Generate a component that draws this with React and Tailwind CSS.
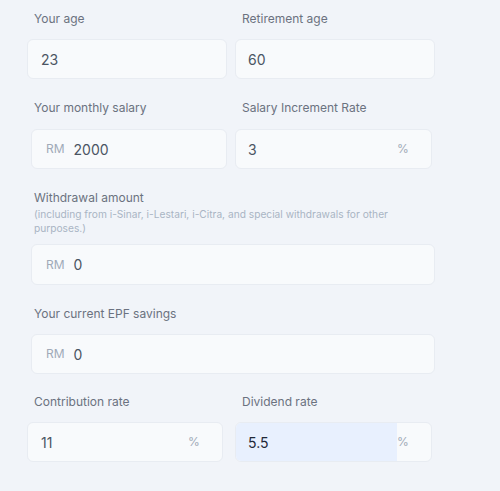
const font = { fontFamily: 'Inter, "Noto Sans", sans-serif' };

function Label({ children, className = '' }) {
  return <div className={`text-[12px] leading-5 text-[#6b7280] ${className}`}>{children}</div>;
}

function Field({ value, prefix, suffix, highlight, className = '' }) {
  return (
    <div className={`flex h-10 items-center overflow-hidden rounded-md border border-[#e8ecf2] bg-[#f8fafc] ${className}`}>
      {prefix && <span className="pl-[14px] pr-[9px] text-[12px] text-[#a0aab8]">{prefix}</span>}
      <div className={`flex h-full flex-1 items-center text-[14px] ${prefix ? '' : 'pl-3'} ${highlight ? 'bg-[#e8f0fe] text-[#1f2937]' : 'text-[#4b5563]'}`}>
        {value}
      </div>
      {suffix && <span className="w-[34px] text-[12px] text-[#a0aab8]">{suffix}</span>}
    </div>
  );
}

export default function App() {
  return (
    <div className="min-h-[491px] w-[500px] bg-[#f1f4f9] pt-[9px]" style={font}>
      {/* age row */}
      <div className="flex gap-2 pl-[27px]">
        <div className="w-[200px]">
          <Label className="pl-[7px]">Your age</Label>
          <Field value="23" className="mt-[10px] [&>div]:pl-[13px]" />
        </div>
        <div className="w-[200px]">
          <Label className="pl-[7px]">Retirement age</Label>
          <Field value="60" className="mt-[10px]" />
        </div>
      </div>

      {/* salary row */}
      <div className="mt-[19px] flex pl-[27px]">
        <div className="w-[200px]">
          <Label className="pl-[7px]">Your monthly salary</Label>
          <Field value="2000" prefix="RM" className="ml-[4px] mt-[11px] w-[196px]" />
        </div>
        <div className="ml-2 w-[197px]">
          <Label className="pl-[7px]">Salary Increment Rate</Label>
          <Field value="3" suffix="%" className="mt-[11px]" />
        </div>
      </div>

      {/* withdrawal */}
      <div className="mt-[19px] pl-[31px]">
        <Label className="pl-[3px]">Withdrawal amount</Label>
        <p className="mt-[-1px] w-[380px] pl-[3px] text-[10.2px] leading-[14px] text-[#a9b4c4]">
          (including from i-Sinar, i-Lestari, i-Citra, and special withdrawals for other purposes.)
        </p>
        <Field value="0" prefix="RM" className="mt-[9px] h-[41px] w-[404px]" />
      </div>

      {/* epf */}
      <div className="mt-[19px] pl-[31px]">
        <Label className="pl-[3px]">Your current EPF savings</Label>
        <Field value="0" prefix="RM" className="mt-[10px] w-[404px]" />
      </div>

      {/* rates row */}
      <div className="mt-[18px] flex pl-[27px]">
        <div className="w-[200px]">
          <Label className="pl-[7px]">Contribution rate</Label>
          <Field value="11" suffix="%" className="mt-[10px] w-[196px] [&>div]:pl-[13px]" />
        </div>
        <div className="ml-2 w-[197px]">
          <Label className="pl-[7px]">Dividend rate</Label>
          <Field value="5.5" suffix="%" highlight className="mt-[10px]" />
        </div>
      </div>
    </div>
  );
}
